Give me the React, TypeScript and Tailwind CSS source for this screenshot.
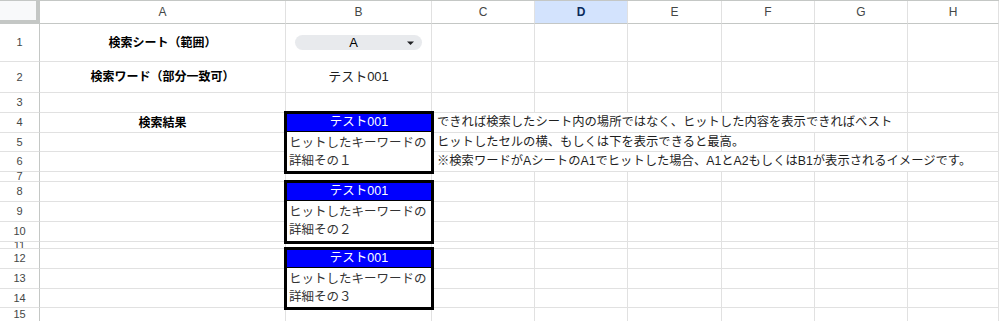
import React from 'react';

const cols = ['A', 'B', 'C', 'D', 'E', 'F', 'G', 'H'];
const rowHeights = [38, 31, 20, 20, 19, 20, 10, 20, 20, 20, 7, 20, 20, 19, 14];

const font = 'font-["Liberation_Sans","Noto_Sans_CJK_JP",sans-serif]';
const cell = 'border-r border-b border-[#e1e1e1] min-w-0';

function RowHead({ n }: { n: number }) {
  return (
    <div className="flex items-center justify-center overflow-hidden border-r border-b border-r-[#c4c7c5] border-b-[#e1e1e1] text-[11px] leading-none text-[#444746]">
      {n}
    </div>
  );
}

function Empty({ count }: { count: number }) {
  return (
    <>
      {Array.from({ length: count }).map((_, i) => (
        <div key={i} className={cell} />
      ))}
    </>
  );
}

function Label({ text }: { text: string }) {
  return (
    <div className={`${cell} flex items-center justify-center text-[12px] font-bold text-black`}>{text}</div>
  );
}

function Dropdown() {
  return (
    <div className={`${cell} flex items-center px-[9px]`}>
      <div className="flex h-[15px] w-full items-center rounded-full bg-[#e8eaed]">
        <span className="flex-1 pl-[10px] text-center text-[13px] leading-none text-black">A</span>
        <svg width="20" height="8" viewBox="0 0 20 8">
          <path d="M5 2.5 L12 2.5 L8.5 6 Z" fill="#202124" />
        </svg>
      </div>
    </div>
  );
}

function ResultBox({ n, span }: { n: string; span: string }) {
  return (
    <div className={`${span} relative z-10 flex flex-col bg-white outline-[3px] outline-black -outline-offset-1`}>
      <div className="flex h-[19px] shrink-0 items-center justify-center border-b border-black bg-[#0000ff] text-[12.5px] text-white">
        テスト001
      </div>
      <div className="px-[3px] pt-[2px] text-[12.5px] leading-[18px] text-[#333333]">
        ヒットしたキーワードの
        <br />
        詳細その{n}
      </div>
    </div>
  );
}

function Note({ text, span }: { text: string; span: string }) {
  return (
    <div className={`${cell} ${span} flex items-center whitespace-nowrap pl-[5px] text-[12.3px] text-[#1f1f1f]`}>{text}</div>
  );
}

export default function App() {
  return (
    <div className={`h-[321px] w-[999px] overflow-hidden bg-white ${font}`}>
      <div className="grid grid-cols-[40px_246px_146px_103px_93px_94px_93px_93px_91px] grid-rows-[23px_38px_31px_20px_20px_19px_20px_10px_20px_20px_20px_7px_20px_20px_19px_14px] border-t border-[#c4c7c5]">
        {/* header row */}
        <div className="border-r-4 border-b-4 border-[#c4c7c5] bg-[#f8f9fa]" />
        {cols.map((c) => (
          <div
            key={c}
            className={
              c === 'D'
                ? 'flex items-center justify-center border-r border-b border-r-[#e1e1e1] border-b-[#c4c7c5] bg-[#d3e3fd] text-[12px] font-bold text-[#0b2a5c]'
                : 'flex items-center justify-center border-r border-b border-r-[#e1e1e1] border-b-[#c4c7c5] text-[12px] text-[#444746]'
            }
          >
            {c}
          </div>
        ))}

        {/* row 1 */}
        <RowHead n={1} />
        <Label text="検索シート（範囲）" />
        <Dropdown />
        <Empty count={6} />

        {/* row 2 */}
        <RowHead n={2} />
        <Label text="検索ワード（部分一致可）" />
        <div className={`${cell} flex items-center justify-center text-[13px] text-[#1f1f1f]`}>テスト001</div>
        <Empty count={6} />

        {/* row 3 */}
        <RowHead n={3} />
        <Empty count={8} />

        {/* row 4 */}
        <RowHead n={4} />
        <Label text="検索結果" />
        <ResultBox n="１" span="row-span-3" />
        <Note span="col-span-5" text="できれば検索したシート内の場所ではなく、ヒットした内容を表示できればベスト" />
        <Empty count={1} />

        {/* row 5 */}
        <RowHead n={5} />
        <Empty count={1} />
        <Note span="col-span-3" text="ヒットしたセルの横、もしくは下を表示できると最高。" />
        <Empty count={3} />

        {/* row 6 */}
        <RowHead n={6} />
        <Empty count={1} />
        <Note span="col-span-6" text="※検索ワードがAシートのA1でヒットした場合、A1とA2もしくはB1が表示されるイメージです。" />

        {/* row 7 */}
        <RowHead n={7} />
        <Empty count={8} />

        {/* rows 8-10 */}
        <RowHead n={8} />
        <Empty count={1} />
        <ResultBox n="２" span="row-span-3" />
        <Empty count={6} />
        <RowHead n={9} />
        <Empty count={7} />
        <RowHead n={10} />
        <Empty count={7} />

        {/* row 11 */}
        <RowHead n={11} />
        <Empty count={8} />

        {/* rows 12-14 */}
        <RowHead n={12} />
        <Empty count={1} />
        <ResultBox n="３" span="row-span-3" />
        <Empty count={6} />
        <RowHead n={13} />
        <Empty count={7} />
        <RowHead n={14} />
        <Empty count={7} />

        {/* row 15 */}
        <RowHead n={15} />
        <Empty count={8} />
      </div>
    </div>
  );
}
